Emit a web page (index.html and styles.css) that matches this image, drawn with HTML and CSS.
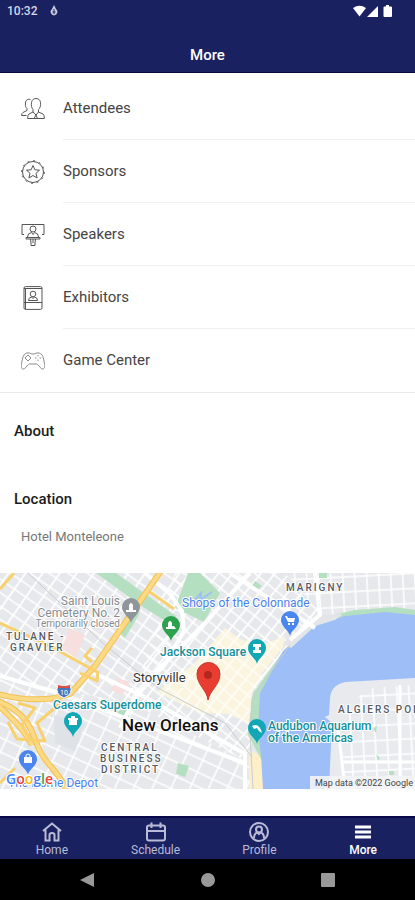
FILE: index.html
```html
<!DOCTYPE html>
<html lang="en">
<head>
    <meta charset="UTF-8">
    <meta name="viewport" content="width=device-width, initial-scale=1.0">
    <link rel="stylesheet" href="styles.css">
    <title>More</title>
</head>
<body>
    <header class="top">
        <div class="status">
            <span>10:32</span>
            <svg class="status-drop" width="8" height="12" viewBox="0 0 8 12">
                <path d="M4 0 L6 4 A3.2 3.6 0 1 1 2 4Z" fill="#c9cce0"/>
                <path d="M4 4 V9 M2.5 7 H5.5" stroke="#1a2160" stroke-width="1"/>
            </svg>
            <svg class="status-icons" width="40" height="12" viewBox="0 0 40 12" fill="#fff">
                <path d="M0 3 Q6.500 -1.500 13 3 L6.500 11.500Z"/>
                <path d="M25 1 V12 H14Z"/>
                <path d="M33 0 H36 V1.500 H38 Q39 1.500 39 2.500 V11 Q39 12 38 12 H31.500 Q30.500 12 30.500 11 V2.500 Q30.500 1.500 31.500 1.500 H33Z"/>
            </svg>
        </div>
        <h1>More</h1>
    </header>

    <main>
        <ul class="menu">
            <li>
                <a href="#attendees">
                    <svg viewBox="0 0 24 24">
                        <path d="M12 12.500 C10.500 11 10 8 10.500 5.500 C11 2.500 13 1.500 15 1.500 C17.500 1.500 19.200 3 19.500 5.500 C20 8 19 11.500 17.500 12.500 V15 L22 17 Q23.500 18 23.300 21.500 H6.700 Q6.500 18 8 17 L12 15Z"/>
                        <path d="M12 15 L15 18 L17.500 15 M13 21.500 L15 18 L16.500 21.500"/>
                        <path d="M9.500 2.500 C6 1.500 4 4 4.500 7 C4 9 5 10.500 6 11.500 V13.500 L2 15.500 Q0.500 16.500 0.600 18.500 H5.500"/>
                    </svg>
                    <span>Attendees</span>
                </a>
            </li>
            <li>
                <a href="#sponsors">
                    <svg viewBox="0 0 24 24">
                        <circle cx="12" cy="12" r="10.500"/>
                        <circle cx="12" cy="12" r="11.300" stroke-dasharray="2 3.900"/>
                        <path d="M12 5.500 L13.900 9.800 L18.500 10.200 L15 13.300 L16.100 18 L12 15.500 L7.900 18 L9 13.300 L5.500 10.200 L10.100 9.800Z"/>
                    </svg>
                    <span>Sponsors</span>
                </a>
            </li>
            <li>
                <a href="#speakers">
                    <svg viewBox="0 0 24 24">
                        <path d="M3 11.500 H1 V1.500 H23 V11.500 H21"/>
                        <circle cx="12" cy="6" r="3"/>
                        <path d="M6.500 14 Q6.500 10 10.500 9.500 L12 11.500 L13.500 9.500 Q17.500 10 17.500 14"/>
                        <path d="M5 14.500 H19 V16 H5Z M9.500 16 L10 20 V22.500 H14 V20 L14.500 16 M12 16 V20"/>
                    </svg>
                    <span>Speakers</span>
                </a>
            </li>
            <li>
                <a href="#exhibitors">
                    <svg viewBox="0 0 24 24">
                        <rect x="3" y="0.600" width="18" height="22.800" rx="1.500"/>
                        <path d="M3 2.500 H21 M3 16.500 H21 M4.500 3 V23"/>
                        <circle cx="12" cy="8" r="2.800"/>
                        <path d="M7.500 14.500 Q7.500 11.500 10.500 11 L12 12.500 L13.500 11 Q16.500 11.500 16.500 14.500Z"/>
                    </svg>
                    <span>Exhibitors</span>
                </a>
            </li>
            <li>
                <a href="#games">
                    <svg class="light" viewBox="0 0 24 24">
                        <path d="M7 4 C9 3.500 9 5 12 5 S15 3.500 17 4 C21 4 22 7 23 12 C24 17 24 19.500 22 20 C19.500 20.500 18 15.500 15.500 15 H8.500 C6 15.500 4.500 20.500 2 20 C0 19.500 0 17 1 12 C2 7 3 4 7 4Z"/>
                        <path d="M7 6 L10 9 L7 12 L4 9Z M17 6 V7.500 M17 10.500 V12 M14 9 H15.500 M18.500 9 H20"/>
                    </svg>
                    <span>Game Center</span>
                </a>
            </li>
        </ul>

        <section class="info">
            <h2>About</h2>
            <h2>Location</h2>
            <p>Hotel Monteleone</p>
        </section>

        <svg class="map" viewBox="0 0 415 216" role="img" aria-label="Map of New Orleans">
            <defs>
                <pattern id="gridWest" width="14" height="11" patternUnits="userSpaceOnUse" patternTransform="rotate(35)">
                    <path d="M0 5 H14 M7 0 V11" stroke="#fff" stroke-width="1.700"/>
                </pattern>
                <pattern id="gridQuarter" width="11" height="11" patternUnits="userSpaceOnUse" patternTransform="rotate(39)">
                    <path d="M0 5 H11 M5 0 V11" stroke="#fff" stroke-width="1.700"/>
                </pattern>
                <pattern id="gridSouth" width="17" height="13" patternUnits="userSpaceOnUse" patternTransform="rotate(25)">
                    <path d="M0 6 H17 M8 0 V13" stroke="#fff" stroke-width="1.500"/>
                </pattern>
                <pattern id="gridEast" width="12" height="15" patternUnits="userSpaceOnUse" patternTransform="rotate(-3)">
                    <path d="M0 7 H12 M6 0 V15" stroke="#fff" stroke-width="1.500"/>
                </pattern>
                <path id="pin" d="M0 0 C-1 -6 -9 -9 -9 -16 A9 9 0 1 1 9 -16 C9 -9 1 -6 0 0Z"/>
            </defs>

            <!-- land -->
            <rect width="415" height="216" fill="#e6e8eb"/>
            <path d="M0 0 H185 L170 80 L130 130 L0 105Z" fill="url(#gridWest)"/>
            <path d="M175 0 H320 V45 L255 130 L250 190 L130 130Z" fill="url(#gridQuarter)"/>
            <path d="M0 105 L130 130 L250 190 V216 H0Z" fill="url(#gridSouth)"/>
            <path d="M285 0 H415 V45 H325Z" fill="#e6e8eb"/>
            <path d="M285 0 H415 V45 H325Z" fill="url(#gridEast)"/>

            <!-- old town and hospital areas -->
            <path d="M225 55 L240 66 L262 72 L285 63 L283 74 L262 100 L252 120 L249 150 L228 141 L200 140 L157 119 L195 90Z" fill="#fbf5e0"/>
            <path d="M225 55 L283 68 L270 90 L250 125 L249 150 L200 140 L157 119 L195 90Z" fill="url(#gridQuarter)" opacity=".7"/>
            <path d="M249 178 L262 182 L265 216 H249Z" fill="#fdf0c8"/>
            <path d="M69 55 L85 62 L76 85 L62 76Z M118 105 L130 109 L122 122 L111 117Z" fill="#f6dfdd"/>
            <path d="M54 142 L85 151 L75 178 L55 170Z" fill="#dfe2e7"/>

            <!-- parks -->
            <path d="M96 0 H116 L176 43 L172 52 L143 34Z M188 0 H200 L220 20 L204 49 L175 35Z M116 139 L129 134 L129 148 L122 147Z M178 190 L189 193 L185 204 L176 201Z M126 41 L140 40 L125 65 L119 59Z M255 8 L262 13 L257 17 L252 13Z M319 0 H327 V5 H319Z" fill="#b5dfc1"/>
            <path d="M192 30 L201 20 L200 27 L212 19" fill="none" stroke="#9dbef7" stroke-width="2"/>

            <!-- river -->
            <path d="M261 186 L248 162 L253 120 L285 76 L320 45 L355 37 L395 34 L415 37 V60 L290 190Z" fill="#b5dfc1"/>
            <path d="M283 78 L310 55 L345 43 L385 39 L415 42 V216 H263 L261 182 L258 160 L260 120Z" fill="#9dbef7"/>
            <path d="M283 70 L320 42 L343 41 L335 47 L315 53 L291 75Z" fill="#e3e5e9"/>
            <path d="M415 105 L345 109 Q331 112 330 125 L329 142 L325 144 L332 150 L329 216 H415Z" fill="#e8eaed"/>
            <path d="M352 128 L372 115 L415 112 V216 H343 V177 L338 160Z" fill="url(#gridEast)"/>
            <path d="M373 156 L377 152 L376 160Z M376 181 L380 185 L378 188Z M389 198 H394 V202 H389Z" fill="#b5dfc1"/>

            <!-- larger streets -->
            <g fill="none" stroke="#fff" stroke-width="4">
                <path d="M145 0 L170 21 L182 38 L184 58 L166 90 L135 125 L120 155"/>
                <path d="M230 0 L315 55 M250 0 L205 50 L145 110"/>
                <path d="M90 98 L145 124 L245 181 V216 M0 103 L58 120 L245 190"/>
                <path d="M315 0 L320 42 L290 67"/>
            </g>
            <path d="M338 155 L345 216 M343 189 H415 M400 112 V216" fill="none" stroke="#fff" stroke-width="3"/>
            <path d="M28 0 L105 72 L158 115 L225 150 L252 184 M253 216 L250 160 L252 125 L290 72" fill="none" stroke="#c9ccd1" stroke-width="1"/>

            <!-- highways -->
            <g fill="none" stroke-linejoin="round">
                <g stroke="#f2bf52" stroke-width="6">
                    <path d="M161 -2 L125 50 L95 93 L70 121 C50 128 25 128 -2 121"/>
                    <path d="M-2 128 C28 140 32 158 38 174 C44 190 58 197 66 216"/>
                    <path d="M-2 132 C15 148 25 158 32 172"/>
                </g>
                <g stroke="#fcda83" stroke-width="4">
                    <path d="M161 -2 L125 50 L95 93 L70 121 C50 128 25 128 -2 121"/>
                    <path d="M-2 128 C28 140 32 158 38 174 C44 190 58 197 66 216"/>
                    <path d="M-2 132 C15 148 25 158 32 172"/>
                </g>
                <path d="M0 50 L50 73 L97 99 M150 19 L174 36 M0 16 L14 0 M8 149 L17 166 L45 168 L37 150 L63 128 M18 130 L35 135 L22 152 L30 166 M98 98 L97 108 L80 100 M92 75 L85 83 L92 89 M0 210 L15 195" stroke="#f9d06e" stroke-width="3"/>
            </g>

            <!-- road shield -->
            <path d="M58 112 Q64 114 70 112 Q74 121 64 125 Q54 121 58 112Z" fill="#4a75bb" stroke="#fff"/>
            <path d="M58 112 Q64 114 70 112 V115 H58Z" fill="#d94f45"/>
            <text class="shield" x="64" y="122">10</text>

            <!-- area labels -->
            <g class="label area">
                <text x="286" y="18">MARIGNY</text>
                <text x="6" y="67">TULANE -</text>
                <text x="10" y="78">GRAVIER</text>
                <text x="338" y="140">ALGIERS POI</text>
                <text x="101" y="178">CENTRAL</text>
                <text x="100" y="189">BUSINESS</text>
                <text x="101" y="200">DISTRICT</text>
            </g>

            <!-- place labels -->
            <g class="label closed">
                <text x="120" y="32">Saint Louis</text>
                <text x="120" y="44">Cemetery No. 2</text>
                <text class="small" x="120" y="54">Temporarily closed</text>
            </g>
            <g class="label shop">
                <text x="182" y="34">Shops of the Colonnade</text>
                <text x="8" y="214">The Home Depot</text>
            </g>
            <g class="label sight">
                <text x="160" y="83">Jackson Square</text>
                <text x="53" y="136">Caesars Superdome</text>
                <text x="268" y="157">Audubon Aquarium</text>
                <text x="268" y="169">of the Americas</text>
            </g>
            <text class="label district" x="133" y="109">Storyville</text>
            <text class="label city" x="122" y="158">New Orleans</text>

            <!-- place pins -->
            <g transform="translate(131 50)">
                <use href="#pin" fill="#8f959b"/>
                <path d="M-5 -11 H5 V-13 H2 V-18 Q0 -22 -2 -18 V-13 H-5Z" fill="#fff"/>
            </g>
            <g transform="translate(171 68)">
                <use href="#pin" fill="#2ca24e"/>
                <path d="M-5 -12 H5 L3 -15 H1 V-18 Q-1 -22 -3 -18 V-14 H-5Z" fill="#fff"/>
            </g>
            <g transform="translate(290 63)">
                <use href="#pin" fill="#4a86ee"/>
                <path d="M-5 -20 H-3 L-2 -18 H5 L4 -14 H-2Z M-2 -13 H0 V-11 H-2Z M2 -13 H4 V-11 H2Z" fill="#fff"/>
            </g>
            <g transform="translate(257 91)">
                <use href="#pin" fill="#12a7b5"/>
                <path d="M-4 -20 H4 V-17 H2 V-14 H4 V-11 H-4 V-14 H-2 V-17 H-4Z" fill="#fff"/>
            </g>
            <g transform="translate(73 164)">
                <use href="#pin" fill="#12a7b5"/>
                <path d="M-4 -12 V-17 H-5 V-19 H-2 V-21 H2 V-19 H5 V-17 H4 V-12Z" fill="#fff"/>
            </g>
            <g transform="translate(257 171)">
                <use href="#pin" fill="#12a7b5"/>
                <path d="M-5 -18 Q2 -22 5 -11 Q1 -13 0 -16 L-3 -15Z" fill="#fff"/>
            </g>
            <g transform="translate(28 202)">
                <use href="#pin" fill="#4a86ee"/>
                <path d="M-4 -18 H4 V-12 H-4Z" fill="#fff"/>
                <path d="M-2 -18 V-20 Q0 -22 2 -20 V-18" fill="none" stroke="#fff"/>
            </g>
            <path d="M208 127 C207 117 197 112 197 101 A11.500 11.500 0 0 1 220 101 C220 112 210 117 208 127Z" fill="#e93d32" stroke="#c7352b"/>
            <circle cx="208" cy="102" r="4" fill="#b0281f"/>

            <text class="label google" x="6" y="211"><tspan fill="#4285f4">G</tspan><tspan fill="#ea4335">o</tspan><tspan fill="#fbbc05">o</tspan><tspan fill="#4285f4">g</tspan><tspan fill="#34a853">l</tspan><tspan fill="#ea4335">e</tspan></text>
            <rect x="310" y="203" width="105" height="13" fill="#f3f4f6" opacity=".9"/>
            <text class="credit" x="413" y="213">Map data ©2022 Google</text>
        </svg>
    </main>

    <nav class="tabs">
        <a href="#home">
            <svg viewBox="0 0 20 20">
                <path d="M1 9 L10 1.500 L19 9 M3.500 7.500 V18.500 H7.500 V13 Q7.500 11 10 11 T12.500 13 V18.500 H16.500 V7.500"/>
            </svg>
            <span>Home</span>
        </a>
        <a href="#schedule">
            <svg viewBox="0 0 20 20">
                <rect x="1" y="3.500" width="18" height="15" rx="2"/>
                <path d="M1 9 H19 M5.500 0.500 V6 M14.500 0.500 V6"/>
            </svg>
            <span>Schedule</span>
        </a>
        <a href="#profile">
            <svg viewBox="0 0 20 20">
                <circle cx="10" cy="10" r="9"/>
                <circle cx="10" cy="7.500" r="3"/>
                <path d="M5 16.500 Q5 11 8.500 10.500 L10 12 L11.500 10.500 Q15 11 15 16.500"/>
            </svg>
            <span>Profile</span>
        </a>
        <a class="active" href="#more">
            <svg viewBox="0 0 20 20">
                <path d="M2 5 H18 M2 10 H18 M2 15 H18"/>
            </svg>
            <span>More</span>
        </a>
    </nav>

    <div class="system">
        <button type="button" aria-label="Back">
            <svg width="14" height="14" viewBox="0 0 14 14"><path d="M14 0 V14 L0 7Z"/></svg>
        </button>
        <button type="button" aria-label="Home screen">
            <svg width="14" height="14" viewBox="0 0 14 14"><circle cx="7" cy="7" r="7"/></svg>
        </button>
        <button type="button" aria-label="Recent apps">
            <svg width="14" height="14" viewBox="0 0 14 14"><rect width="14" height="14" rx="1"/></svg>
        </button>
    </div>
</body>
</html>
```
FILE: styles.css
```css
* {
    box-sizing: border-box;
}

body {
    margin: 0;
    min-height: 100vh;
    display: flex;
    flex-direction: column;
    font-family: Roboto, sans-serif;
    background-color: #fff;
    color: #444;
}

a {
    color: inherit;
    text-decoration: none;
}

.top {
    height: 73px;
    background-color: #1a2160;
    color: #fff;
    border-bottom: 1px solid #08093c;
}

.status {
    display: flex;
    align-items: center;
    gap: 13px;
    height: 22px;
    padding: 0 22px 0 7px;
    font-size: 12px;
    font-weight: 500;
    color: #d5d7e6;
}

.status-icons {
    margin-left: auto;
}

.top h1 {
    margin: 0;
    padding-top: 22px;
    text-align: center;
    font-size: 15px;
    line-height: 22px;
    font-weight: 500;
}

main {
    flex: 1;
}

.menu {
    list-style: none;
    margin: 0;
    padding: 4px 0 0;
    border-bottom: 1px solid #e9e9e9;
}

.menu a {
    display: flex;
    align-items: center;
    gap: 18px;
    padding-left: 21px;
}

.menu svg {
    width: 24px;
    height: 24px;
    fill: none;
    stroke: #555;
    stroke-width: 1;
}

.menu .light {
    stroke: #888;
}

.menu span {
    flex: 1;
    line-height: 62px;
    font-size: 15px;
    border-bottom: 1px solid #f0f0f0;
}

.menu li:last-child span {
    line-height: 63px;
    border-bottom: none;
}

.info {
    padding: 28px 14px 27px;
}

.info h2 {
    margin: 0 0 48px;
    font-size: 15px;
    line-height: 20px;
    font-weight: 500;
    color: #1c1c1c;
}

.info h2 + h2 {
    margin-bottom: 19px;
}

.info p {
    margin: 0;
    padding-left: 7px;
    font-size: 13px;
    line-height: 18px;
    color: #777;
}

.map {
    display: block;
    width: 100%;
}

.label {
    font-size: 12px;
    paint-order: stroke;
    stroke: #fff;
    stroke-width: 2px;
    stroke-linejoin: round;
}

.area {
    font-size: 10px;
    font-weight: 500;
    letter-spacing: 2px;
    fill: #555a60;
}

.closed {
    fill: #878c91;
    text-anchor: end;
}

.closed .small {
    font-size: 10px;
}

.shop {
    fill: #4a80ec;
}

.sight {
    font-weight: 500;
    fill: #128f9b;
}

.district {
    font-size: 13px;
    fill: #333;
}

.city {
    font-size: 17px;
    font-weight: 500;
    fill: #111;
}

.google {
    font-family: "Open Sans", sans-serif;
    font-size: 14px;
    font-weight: 600;
}

.shield {
    font-size: 7px;
    text-anchor: middle;
    fill: #fff;
}

.credit {
    font-size: 9px;
    text-anchor: end;
    fill: #444;
}

.tabs {
    display: flex;
    height: 43px;
    background-color: #1a2160;
    border-top: 2px solid #08094c;
    color: #b9bcd6;
}

.tabs a {
    flex: 1;
    display: flex;
    flex-direction: column;
    align-items: center;
    padding-top: 4px;
    font-size: 12px;
    line-height: 16px;
}

.tabs svg {
    width: 20px;
    height: 20px;
    fill: none;
    stroke: currentColor;
    stroke-width: 2;
}

.tabs .active {
    color: #fff;
    font-weight: 500;
}

.tabs .active svg {
    stroke-width: 3;
}

.system {
    display: flex;
    justify-content: space-between;
    height: 41px;
    padding: 0 73px;
    background-color: #000;
}

.system button {
    padding: 0 7px;
    border: none;
    background: none;
    cursor: pointer;
}

.system svg {
    display: block;
    fill: #999;
}
```
